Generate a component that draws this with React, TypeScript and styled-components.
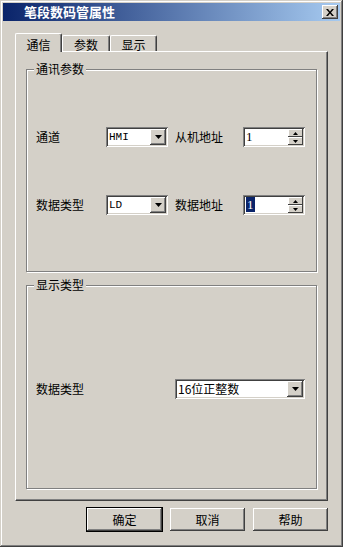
import styled, { createGlobalStyle, css } from "styled-components";

const FACE = "#d4d0c8";

const GlobalStyle = createGlobalStyle`
  html, body {
    margin: 0;
    padding: 0;
    background: ${FACE};
  }
  body {
    font-family: "Noto Sans CJK SC", "Liberation Sans", sans-serif;
    font-size: 12px;
    color: #000;
  }
`;

const raised = css`
  box-shadow: inset -1px -1px #404040, inset 1px 1px #fff,
    inset -2px -2px #808080, inset 2px 2px ${FACE};
`;

const sunken = css`
  box-shadow: inset 1px 1px #808080, inset -1px -1px #fff,
    inset 2px 2px #404040, inset -2px -2px ${FACE};
`;

export default function App() {
  return (
    <>
      <GlobalStyle />
      <Window>
        <TitleBar>
          <Title>笔段数码管属性</Title>
          <CloseButton>
            <svg width="8" height="7" viewBox="0 0 8 7">
              <path d="M0 0h2l2 2.5L6 0h2L5 3.5 8 7H6L4 4.5 2 7H0l3-3.5z" fill="#000" />
            </svg>
          </CloseButton>
        </TitleBar>
        <Body>
          <TabStrip>
            <Tab $active $w={47}>通信</Tab>
            <Tab $w={48}>参数</Tab>
            <Tab $w={47}>显示</Tab>
          </TabStrip>
          <Panel>
            <Group $h={203} $pt={57}>
              <Caption>通讯参数</Caption>
              <CommGrid>
                <Label>通道</Label>
                <Combo $w={62} value="HMI" mono />
                <Label>从机地址</Label>
                <Spin value="1" />
                <Label>数据类型</Label>
                <Combo $w={62} value="LD" mono />
                <Label>数据地址</Label>
                <Spin value="1" selected />
              </CommGrid>
            </Group>
            <Group $h={204} $pt={93}>
              <Caption>显示类型</Caption>
              <DisplayGrid>
                <Label>数据类型</Label>
                <Combo $w={130} value="16位正整数" />
              </DisplayGrid>
            </Group>
          </Panel>
          <ButtonRow>
            <Button $default>确定</Button>
            <Button>取消</Button>
            <Button>帮助</Button>
          </ButtonRow>
        </Body>
      </Window>
    </>
  );
}

function Combo({ $w, value, mono }: { $w: number; value: string; mono?: boolean }) {
  return (
    <ComboBox $w={$w}>
      <FieldText $mono={mono}>{value}</FieldText>
      <DropButton>
        <svg width="7" height="4" viewBox="0 0 7 4">
          <path d="M0 0h7L3.5 4z" fill="#000" />
        </svg>
      </DropButton>
    </ComboBox>
  );
}

function Spin({ value, selected }: { value: string; selected?: boolean }) {
  return (
    <SpinBox>
      <FieldText $serif>
        {selected ? <Selection>{value}</Selection> : value}
      </FieldText>
      <SpinButtons>
        <SpinHalf>
          <svg width="5" height="3" viewBox="0 0 5 3">
            <path d="M2.5 0L5 3H0z" fill="#000" />
          </svg>
        </SpinHalf>
        <SpinHalf>
          <svg width="5" height="3" viewBox="0 0 5 3">
            <path d="M0 0h5L2.5 3z" fill="#000" />
          </svg>
        </SpinHalf>
      </SpinButtons>
    </SpinBox>
  );
}

const Window = styled.div`
  box-sizing: border-box;
  width: 343px;
  height: 547px;
  display: flex;
  flex-direction: column;
  padding: 3px;
  background: ${FACE};
  box-shadow: inset -1px -1px #404040, inset 1px 1px ${FACE},
    inset -2px -2px #808080, inset 2px 2px #fff;
`;

const TitleBar = styled.div`
  height: 18px;
  display: flex;
  align-items: center;
  justify-content: space-between;
  padding: 0 2px 0 21px;
  background: linear-gradient(to right, #0a246a, #a6caf0);
`;

const Title = styled.span`
  color: #fff;
  font-weight: 700;
  font-size: 13px;
  line-height: 14px;
`;

const CloseButton = styled.div`
  box-sizing: border-box;
  width: 16px;
  height: 14px;
  display: flex;
  align-items: center;
  justify-content: center;
  background: ${FACE};
  box-shadow: inset -1px -1px #404040, inset 1px 1px #fff,
    inset -2px -2px #808080;
`;

const Body = styled.div`
  display: flex;
  flex-direction: column;
  padding: 12px 12px 0 12px;
`;

const TabStrip = styled.div`
  display: flex;
  align-items: flex-end;
  height: 19px;
  margin-bottom: -1px;
  position: relative;
  z-index: 1;
`;

const Tab = styled.div<{ $active?: boolean; $w: number }>`
  box-sizing: border-box;
  width: ${(p) => p.$w}px;
  height: ${(p) => (p.$active ? 19 : 16)}px;
  margin-bottom: ${(p) => (p.$active ? 0 : 1)}px;
  padding-top: ${(p) => (p.$active ? 4 : 2)}px;
  display: flex;
  justify-content: center;
  line-height: 14px;
  background: ${FACE};
  border-left: 1px solid #fff;
  border-top: 1px solid #fff;
  border-right: 1px solid #404040;
  border-radius: 2px 2px 0 0;
  box-shadow: inset -1px 0 #808080;
`;

const Panel = styled.div`
  box-sizing: border-box;
  width: 313px;
  height: 450px;
  display: flex;
  flex-direction: column;
  gap: 13px;
  padding: 17px 0 0 10px;
  border-top: 1px solid #fff;
  border-left: 1px solid #fff;
  border-right: 1px solid #404040;
  border-bottom: 1px solid #404040;
  box-shadow: inset -1px -1px #808080;
`;

const Group = styled.div<{ $h: number; $pt: number }>`
  position: relative;
  box-sizing: border-box;
  width: 291px;
  height: ${(p) => p.$h}px;
  padding: ${(p) => p.$pt}px 0 0 9px;
  border: 1px solid #808080;
  box-shadow: inset 1px 1px #fff, 1px 1px #fff;
`;

const Caption = styled.span`
  position: absolute;
  top: -8px;
  left: 7px;
  padding: 0 2px;
  line-height: 14px;
  background: ${FACE};
`;

const CommGrid = styled.div`
  display: grid;
  grid-template-columns: 70px 69px 68px 62px;
  row-gap: 48px;
  align-items: center;
`;

const DisplayGrid = styled.div`
  display: grid;
  grid-template-columns: 139px 130px;
  align-items: center;
`;

const Label = styled.span`
  line-height: 14px;
`;

const ComboBox = styled.div<{ $w: number }>`
  box-sizing: border-box;
  width: ${(p) => p.$w}px;
  height: 20px;
  display: flex;
  align-items: center;
  padding: 2px;
  background: #fff;
  ${sunken};
`;

const FieldText = styled.span<{ $mono?: boolean; $serif?: boolean }>`
  flex: 1;
  min-width: 0;
  padding-left: 1px;
  line-height: 16px;
  white-space: nowrap;
  font-family: ${(p) =>
    p.$mono
      ? '"Liberation Mono", monospace'
      : p.$serif
      ? '"Liberation Serif", serif'
      : '"Noto Sans CJK SC", "Liberation Sans", sans-serif'};
  font-size: ${(p) => (p.$mono ? "11px" : p.$serif ? "13px" : "12px")};
`;

const Selection = styled.span`
  background: #0a246a;
  color: #fff;
  padding: 0 1px;
`;

const DropButton = styled.div`
  box-sizing: border-box;
  flex-shrink: 0;
  width: 16px;
  height: 16px;
  display: flex;
  align-items: center;
  justify-content: center;
  background: ${FACE};
  ${raised};
`;

const SpinBox = styled.div`
  box-sizing: border-box;
  width: 62px;
  height: 20px;
  display: flex;
  align-items: center;
  padding: 2px;
  background: #fff;
  ${sunken};
`;

const SpinButtons = styled.div`
  display: flex;
  flex-direction: column;
  flex-shrink: 0;
  width: 15px;
  height: 16px;
`;

const SpinHalf = styled.div`
  box-sizing: border-box;
  height: 8px;
  display: flex;
  align-items: center;
  justify-content: center;
  background: ${FACE};
  box-shadow: inset -1px -1px #404040, inset 1px 1px #fff;
`;

const ButtonRow = styled.div`
  display: flex;
  justify-content: flex-end;
  gap: 8px;
  margin-top: 7px;
`;

const Button = styled.div<{ $default?: boolean }>`
  box-sizing: border-box;
  width: 75px;
  height: 23px;
  display: flex;
  align-items: center;
  justify-content: center;
  line-height: 14px;
  background: ${FACE};
  ${raised};
  outline: ${(p) => (p.$default ? "1px solid #000" : "none")};
`;
